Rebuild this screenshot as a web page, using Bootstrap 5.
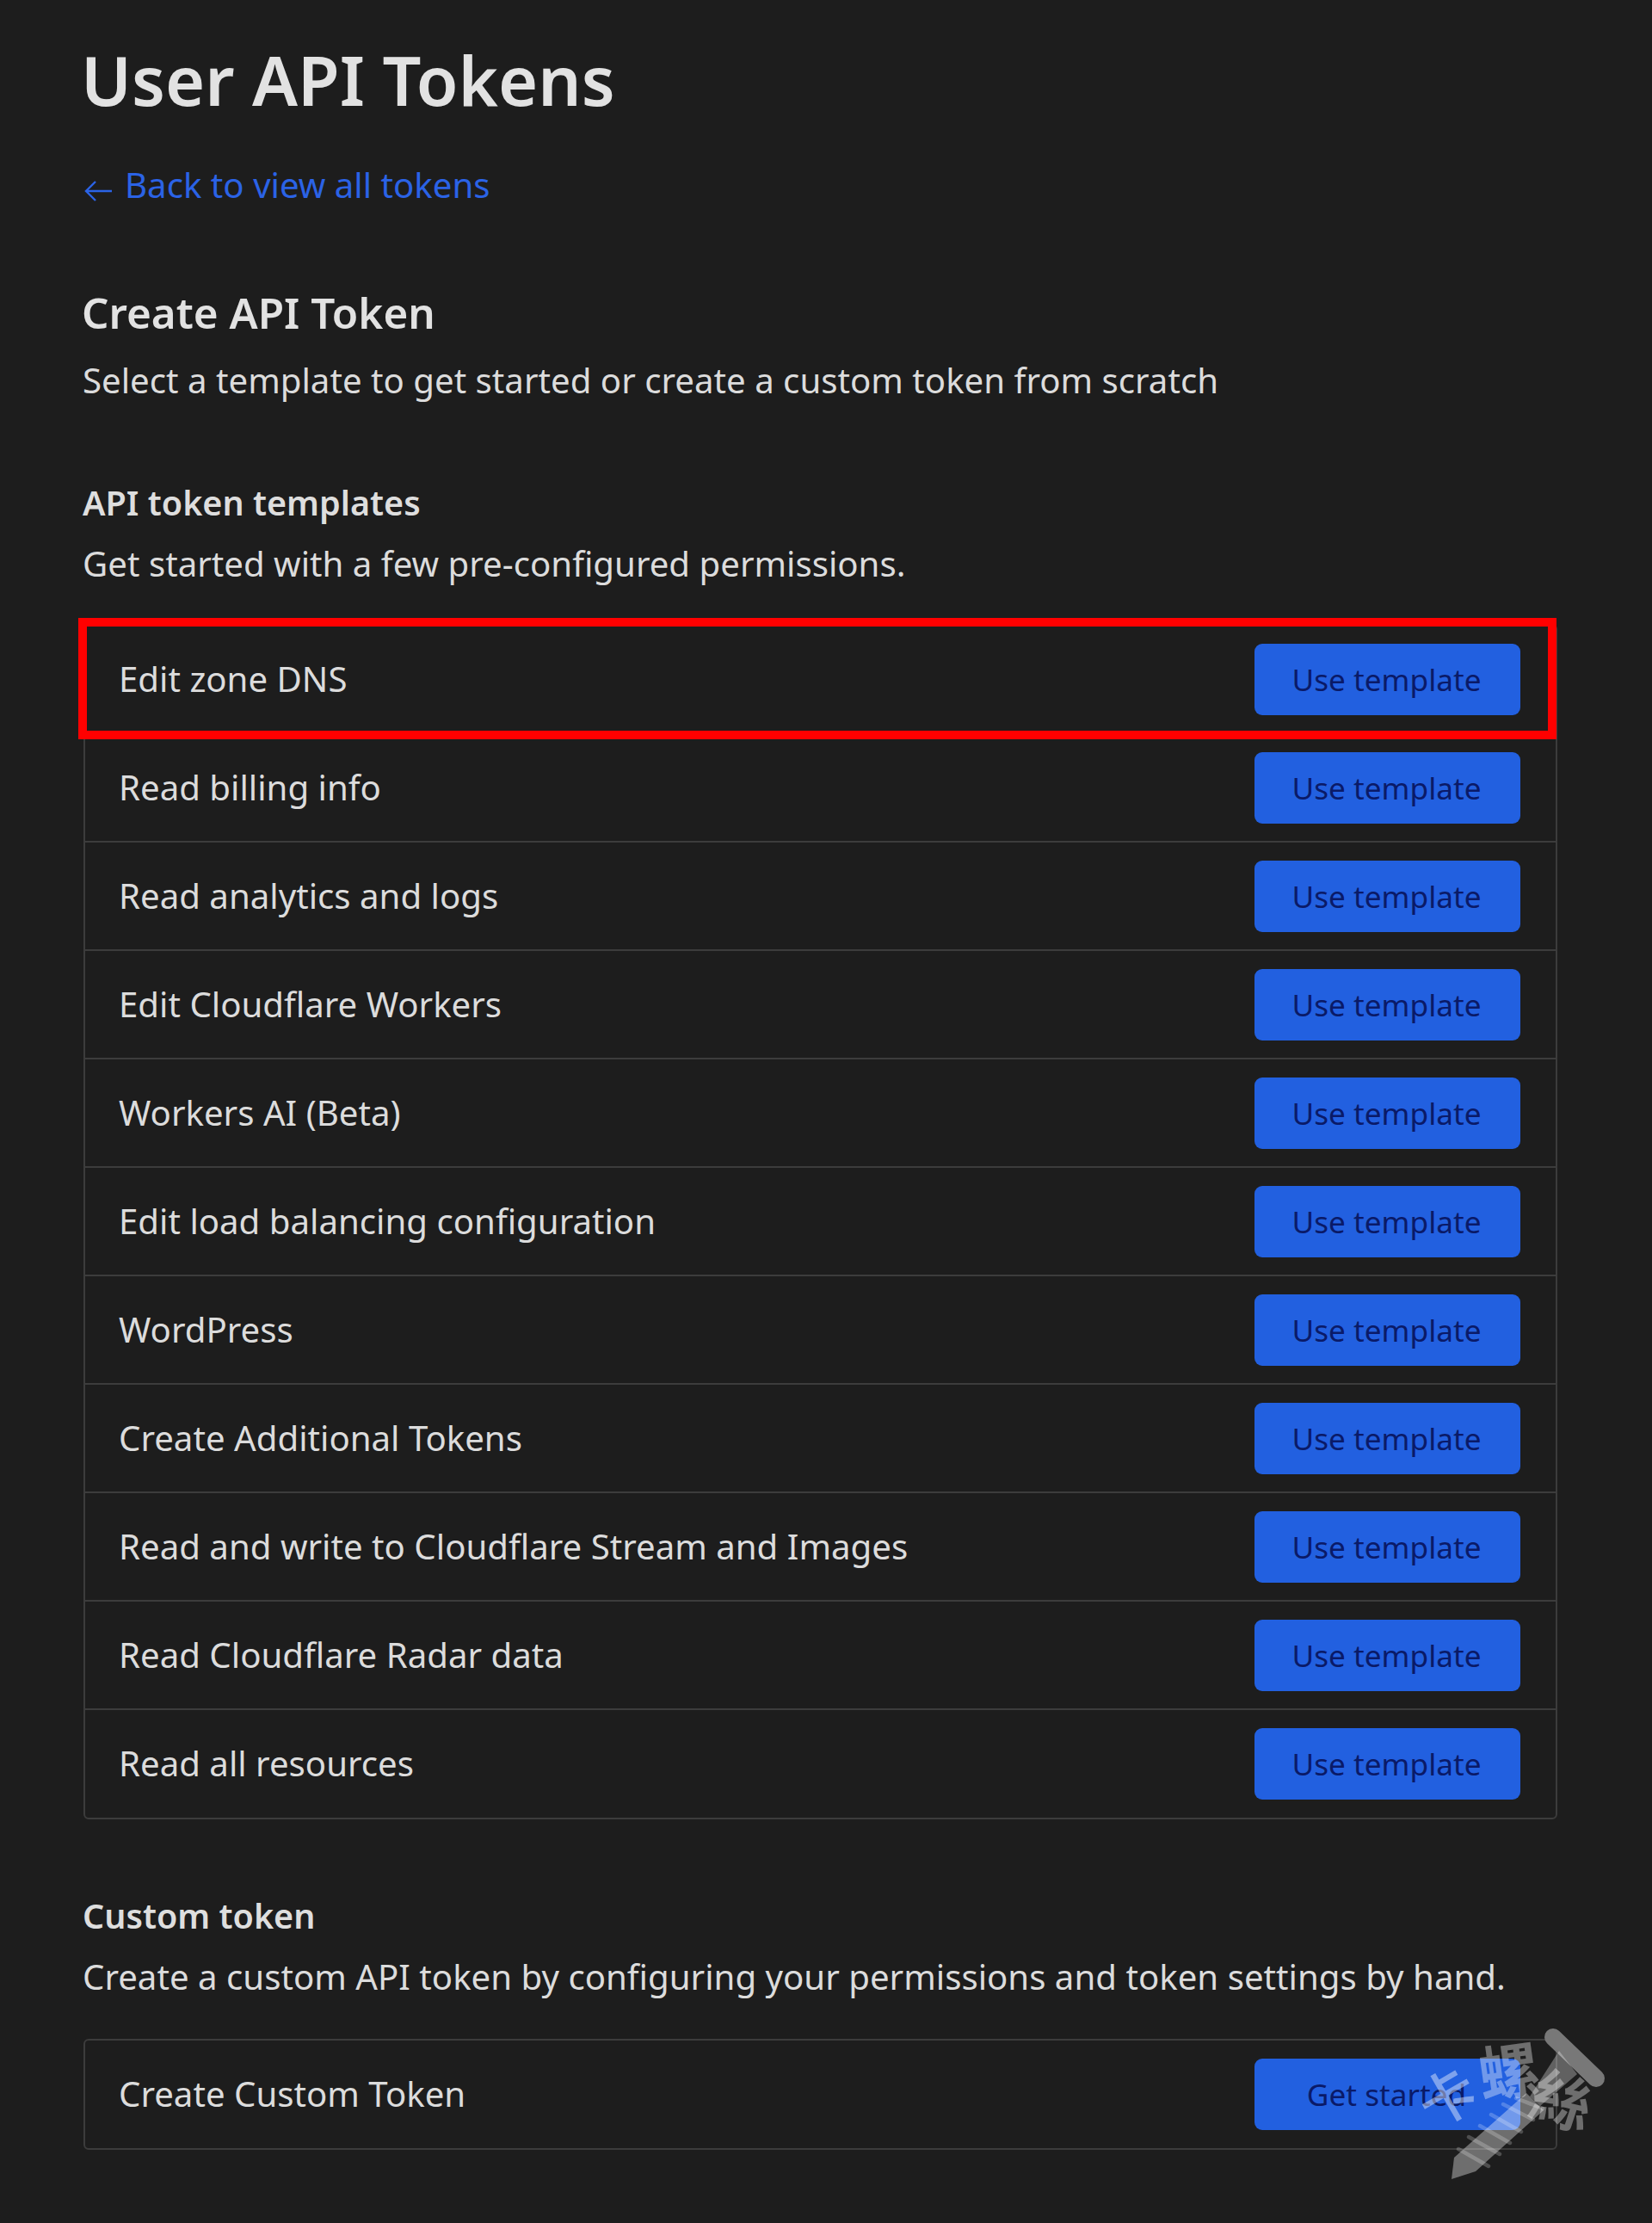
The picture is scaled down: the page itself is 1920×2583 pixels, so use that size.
<!doctype html>
<html lang="en">
<head>
<meta charset="utf-8">
<title>User API Tokens</title>
<link href="https://cdn.jsdelivr.net/npm/bootstrap@5.3.0/dist/css/bootstrap.min.css" rel="stylesheet">
<style>
html,body{background:#1d1d1d;}
body{font-family:"Noto Sans","Liberation Sans",sans-serif;color:#dcdcdc;height:2583px;overflow:hidden;position:relative;font-size:40.2px;line-height:1.3;}
.shell{padding:0 110px 0 97px;}
.page-title{font-size:79px;font-weight:600;line-height:81px;margin:0 0 0 -3px;padding-top:52px;color:#e2e2e2;}
.back-row{margin-top:54px;font-size:40.2px;line-height:56px;}
.back-row a{color:#2b63e6;text-decoration:none;}
.back-row svg{width:34px;height:30px;vertical-align:-7px;margin-right:14px;}
.create-head{font-size:49.4px;font-weight:600;line-height:64px;margin:88px 0 0 -2px;color:#e2e2e2;}
.lede{margin:19px 0 0 -1px;line-height:56px;}
.sect-head{font-size:39.5px;font-weight:600;line-height:52px;margin:88px 0 0 -1px;color:#dedede;}
.sect-sub{margin:17px 0 0 -1px;line-height:56px;}
.token-list{margin-top:42px;border:2px solid #3c3c3c;border-radius:6px;background:transparent;}
.token-list .list-group-item{background:transparent;border:0;border-bottom:2px solid #3c3c3c;color:#dcdcdc;padding:21px 41px 20px 39px;border-radius:0;font-size:40.2px;position:relative;}
.token-list .list-group-item:last-child{border-bottom:0;padding-bottom:21px;}
.tpl-btn{width:309px;height:83px;padding:0 2px 0 0;background:#2260e0;border:0;border-radius:9px;color:#0a1a68;font-size:35.2px;line-height:79px;flex:none;}
.tpl-btn:hover{background:#2260e0;color:#0a1a68;}
.hilite{position:absolute;left:-8px;right:-1px;top:-9px;bottom:-8px;border:10px solid #ff0000;pointer-events:none;}
.custom-head{margin-top:86px;}
.custom-list{margin-top:44px;}
.wmark{position:absolute;left:1640px;top:2340px;width:260px;height:200px;overflow:visible;pointer-events:none;}
.wmark text{font-family:"Noto Sans CJK TC",sans-serif;fill:#fff;fill-opacity:.36;text-anchor:middle;dominant-baseline:central;}
.wmark .thin-glyph{font-size:66px;font-weight:500;fill-opacity:.42;}
.wmark .dense-glyph{font-size:70px;font-weight:700;}
</style>
</head>
<body>
<div class="shell">
  <h1 class="page-title">User API Tokens</h1>
  <div class="back-row"><a href="#"><svg viewBox="0 0 34 30" fill="none" stroke="#2b63e6" stroke-width="2.4"><path d="M33 15H3M14 4 3 15l11 11"/></svg>Back to view all tokens</a></div>
  <h2 class="create-head">Create API Token</h2>
  <p class="lede">Select a template to get started or create a custom token from scratch</p>
  <h3 class="sect-head">API token templates</h3>
  <p class="sect-sub">Get started with a few pre-configured permissions.</p>
  <div class="list-group token-list">
    <div class="list-group-item d-flex justify-content-between align-items-center"><span>Edit zone DNS</span><button class="btn tpl-btn">Use template</button><div class="hilite"></div></div>
    <div class="list-group-item d-flex justify-content-between align-items-center"><span>Read billing info</span><button class="btn tpl-btn">Use template</button></div>
    <div class="list-group-item d-flex justify-content-between align-items-center"><span>Read analytics and logs</span><button class="btn tpl-btn">Use template</button></div>
    <div class="list-group-item d-flex justify-content-between align-items-center"><span>Edit Cloudflare Workers</span><button class="btn tpl-btn">Use template</button></div>
    <div class="list-group-item d-flex justify-content-between align-items-center"><span>Workers AI (Beta)</span><button class="btn tpl-btn">Use template</button></div>
    <div class="list-group-item d-flex justify-content-between align-items-center"><span>Edit load balancing configuration</span><button class="btn tpl-btn">Use template</button></div>
    <div class="list-group-item d-flex justify-content-between align-items-center"><span>WordPress</span><button class="btn tpl-btn">Use template</button></div>
    <div class="list-group-item d-flex justify-content-between align-items-center"><span>Create Additional Tokens</span><button class="btn tpl-btn">Use template</button></div>
    <div class="list-group-item d-flex justify-content-between align-items-center"><span>Read and write to Cloudflare Stream and Images</span><button class="btn tpl-btn">Use template</button></div>
    <div class="list-group-item d-flex justify-content-between align-items-center"><span>Read Cloudflare Radar data</span><button class="btn tpl-btn">Use template</button></div>
    <div class="list-group-item d-flex justify-content-between align-items-center"><span>Read all resources</span><button class="btn tpl-btn">Use template</button></div>
  </div>
  <h3 class="sect-head custom-head">Custom token</h3>
  <p class="sect-sub">Create a custom API token by configuring your permissions and token settings by hand.</p>
  <div class="list-group token-list custom-list">
    <div class="list-group-item d-flex justify-content-between align-items-center"><span>Create Custom Token</span><button class="btn tpl-btn">Get started</button></div>
  </div>
</div>
<svg class="wmark" viewBox="0 0 260 200" aria-hidden="true">
  <path d="M165 27 215 75" stroke="#787878" stroke-width="20" stroke-linecap="round" fill="none"/>
  <path d="M172 43 193 70 150 107 138 96z" fill="#fff" fill-opacity=".3"/>
  <path d="M47 192 50 167 134 92 154 112 75 183z" fill="#fff" fill-opacity=".36"/>
  <g stroke="#fff" stroke-opacity=".22" stroke-width="4.5" stroke-linecap="round">
    <path d="M55 157 90 177M67 143 103 163M80 130 115 150M93 117 128 137M107 105 142 123M122 98 153 110"/>
  </g>
  <text class="thin-glyph" transform="translate(40 93) rotate(-30)">卡</text>
  <text class="dense-glyph" transform="translate(113 63) rotate(-8)">螺</text>
  <text class="dense-glyph" transform="translate(177 97) rotate(18)">絲</text>
</svg>
<script src="https://cdn.jsdelivr.net/npm/bootstrap@5.3.0/dist/js/bootstrap.bundle.min.js"></script>
</body>
</html>
